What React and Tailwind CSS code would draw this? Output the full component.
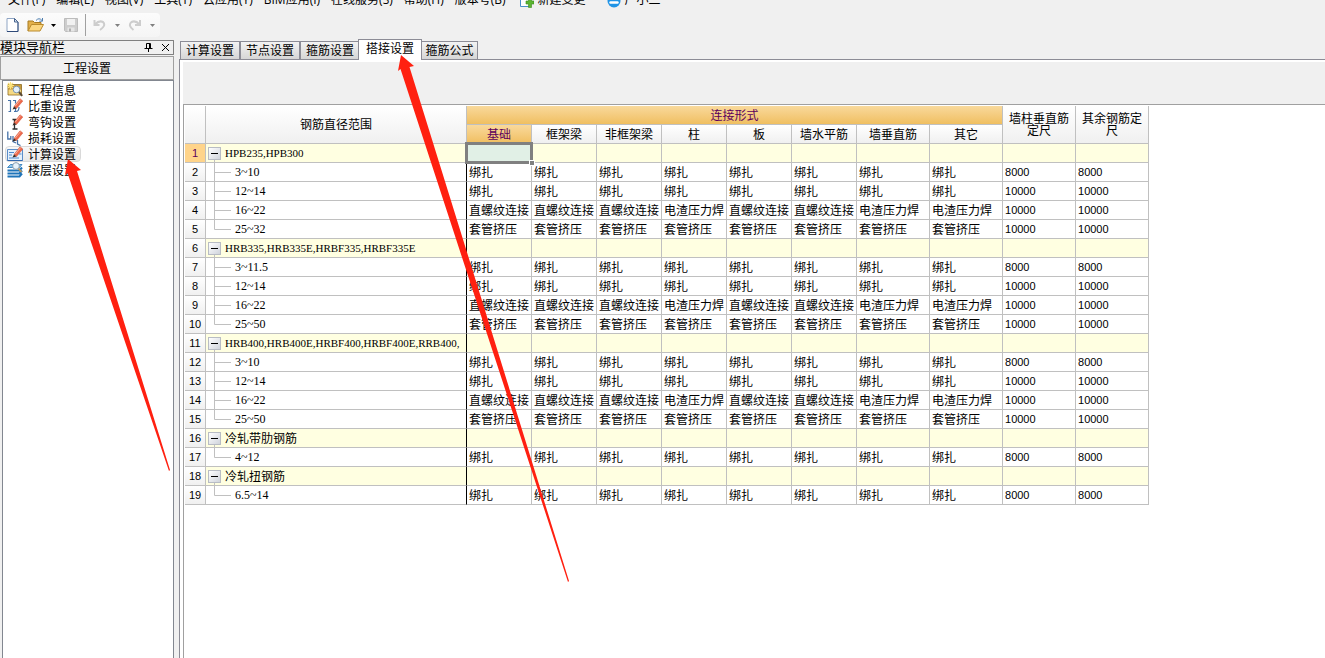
import React from "react";

const menus = ["文件(F)", "编辑(E)", "视图(V)", "工具(T)", "云应用(Y)", "BIM应用(I)", "在线服务(S)", "帮助(H)", "版本号(B)"];
const tabs = ["计算设置", "节点设置", "箍筋设置", "搭接设置", "箍筋公式"];
const columns = ["基础", "框架梁", "非框架梁", "柱", "板", "墙水平筋", "墙垂直筋", "其它"];

const B = "绑扎";
const Z = "直螺纹连接";
const D = "电渣压力焊";
const T = "套管挤压";
const tie = [B, B, B, B, B, B, B, B];
const thread = [Z, Z, Z, D, Z, Z, D, D];
const sleeve = [T, T, T, T, T, T, T, T];

const rows = [
  { group: "HPB235,HPB300" },
  { name: "3~10", cells: tie, len: "8000" },
  { name: "12~14", cells: tie, len: "10000" },
  { name: "16~22", cells: thread, len: "10000" },
  { name: "25~32", cells: sleeve, len: "10000", last: true },
  { group: "HRB335,HRB335E,HRBF335,HRBF335E" },
  { name: "3~11.5", cells: tie, len: "8000" },
  { name: "12~14", cells: tie, len: "10000" },
  { name: "16~22", cells: thread, len: "10000" },
  { name: "25~50", cells: sleeve, len: "10000", last: true },
  { group: "HRB400,HRB400E,HRBF400,HRBF400E,RRB400," },
  { name: "3~10", cells: tie, len: "8000" },
  { name: "12~14", cells: tie, len: "10000" },
  { name: "16~22", cells: thread, len: "10000" },
  { name: "25~50", cells: sleeve, len: "10000", last: true },
  { group: "冷轧带肋钢筋" },
  { name: "4~12", cells: tie, len: "8000", last: true },
  { group: "冷轧扭钢筋" },
  { name: "6.5~14", cells: tie, len: "8000", last: true },
];

function Pencil() {
  return (
    <g>
      <path d="M7 8.500 L13 0.800 L15.800 3 L9.500 10.500 Z" fill="#ee6a4c" stroke="#cf4a30" strokeWidth="0.5" />
      <path d="M8.300 8 L13.600 1.600" stroke="#f9b09c" strokeWidth="1" />
      <path d="M7 8.500 L5.500 11.500 L9.500 10.500 Z" fill="#3a2a22" />
    </g>
  );
}

const navIcons = {
  info: (
    <g>
      <path d="M1 2.500 h13.500 v10.500 h-13.500 z" fill="#c79a3c" stroke="#8a6a22" strokeWidth="0.8" />
      <path d="M1.500 7.500 h12.500 v5 h-12.500 z" fill="#f5d985" />
      <path d="M3.500 0 v7 M0 3.500 h7 M1 1 l5 5 M6 1 l-5 5" stroke="#fbe27a" strokeWidth="1.200" />
      <circle cx="9.500" cy="7.500" r="3.300" fill="#e4f1fb" stroke="#7f96ac" strokeWidth="1" />
      <path d="M12 10 l3.200 3.800" stroke="#5a4a36" strokeWidth="2" />
    </g>
  ),
  weight: (
    <g>
      <path d="M1 2.500 h2.500 v11 h-2 M6 2.500 h2.500 v3 M7 13.500 h1.500 v-4 M12 9 q0 4.500 -3 4.500" fill="none" stroke="#4672a8" strokeWidth="1.200" />
      <Pencil />
    </g>
  ),
  hook: (
    <g>
      <path d="M5.500 5.500 h4 M7.500 5.500 v9 M5.500 15 h5" fill="none" stroke="#2f2f2f" strokeWidth="1.300" />
      <Pencil />
    </g>
  ),
  loss: (
    <g>
      <path d="M0.800 1.500 v7.500 h3 v-3 M6 6 v5.500 l3 1.500 M10.500 10 v4 l3 1.500" fill="none" stroke="#4672a8" strokeWidth="1.300" />
      <Pencil />
    </g>
  ),
  calc: (
    <g>
      <path d="M0.500 3.500 h15 v11 h-15 z" fill="#e4f0fb" stroke="#5b8dc9" strokeWidth="1" />
      <path d="M0.500 14.500 h15" stroke="#2f68b0" strokeWidth="1" />
      <path d="M2 6.500 h5 M2 9 h3 M2 12 h10 M12 8 h2.500" stroke="#4f8ad0" strokeWidth="1.200" />
      <Pencil />
    </g>
  ),
  floor: (
    <g>
      <path d="M0.500 5.500 l3 -3 h11.500 l-2.500 3 z" fill="#8cc6ee" stroke="#2474b5" strokeWidth="0.8" />
      <path d="M0.500 8.500 h12 l2.500 -3 M0.500 11.500 h12 l2.500 -3 M0.500 14.500 h12 l2.500 -3" fill="none" stroke="#1e74ba" strokeWidth="2" />
      <circle cx="9" cy="4" r="3.400" fill="#e6f2fa" stroke="#8b9fb0" strokeWidth="1" />
      <path d="M11.500 6.500 l3 3.500" stroke="#c09a5c" strokeWidth="1.800" />
    </g>
  ),
};

const nav = [
  ["工程信息", "info"],
  ["比重设置", "weight"],
  ["弯钩设置", "hook"],
  ["损耗设置", "loss"],
  ["计算设置", "calc"],
  ["楼层设置", "floor"],
];

function MenuBar() {
  return (
    <nav className="flex h-3 items-end gap-px overflow-hidden pl-[3px] font-['Open_Sans','Noto_Sans_CJK_SC',sans-serif]" aria-label="菜单">
      {menus.map((m) => (
        <button key={m} type="button" className="shrink-0 px-[5px] pb-1 text-xs leading-4 whitespace-nowrap">
          {m}
        </button>
      ))}
      <button type="button" className="ml-2 flex shrink-0 items-end gap-1 pb-1 text-xs leading-4 whitespace-nowrap">
        <svg width="14" height="14" viewBox="0 0 14 14" aria-hidden="true">
          <path d="M0.500 0 v12.500 h10 V0" fill="#fff" stroke="#4a90c8" />
          <path d="M8.500 4 h3 v3 h2.500 v3 h-2.500 v3.500 h-3 v-3.500 h-2.500 v-3 h2.500 z" fill="#5cb531" stroke="#3a8a1c" strokeWidth="0.600" />
        </svg>
        新建变更
      </button>
      <button type="button" className="ml-5 flex shrink-0 items-end gap-1 pb-1 text-xs leading-4 whitespace-nowrap">
        <svg width="14" height="14" viewBox="0 0 14 14" aria-hidden="true">
          <circle cx="7" cy="7" r="6.500" fill="#2094e6" />
          <path d="M3.500 8.500 h7" fill="none" stroke="#fff" strokeWidth="2.400" strokeLinecap="round" />
        </svg>
        广小二
      </button>
    </nav>
  );
}

function Caret({ className }) {
  return (
    <svg width="5" height="3" viewBox="0 0 5 3" className={className} aria-hidden="true">
      <path d="M0 0 h5 l-2.500 3 z" fill="currentColor" />
    </svg>
  );
}

function ToolBar() {
  return (
    <div className="flex h-6 w-40 items-center rounded-sm bg-gradient-to-b from-[#fcfcfc] to-[#f5f5f5] pl-1.5" role="toolbar">
      <button type="button" aria-label="新建" className="mr-2">
        <svg width="13" height="16" viewBox="0 0 13 16">
          <path d="M1 1.500 h7.500 l3.500 3.500 v9.500 h-11 z" fill="#fff" stroke="#8fa5c4" />
          <path d="M12 5 v9.500 h-11" fill="none" stroke="#2f4a78" />
          <path d="M8.500 1.500 v3.500 h3.500 z" fill="#dbe6f3" stroke="#47648e" />
        </svg>
      </button>
      <button type="button" aria-label="打开" className="flex items-center gap-1.5">
        <svg width="18" height="16" viewBox="0 0 18 16">
          <path d="M1 14 V4 h5 l1.500 1.500 h6.500 v3" fill="#e3b04a" stroke="#a67a22" />
          <path d="M1 14 l3.500 -6.500 h12 l-3.500 6.500 z" fill="#fbd680" stroke="#b98a2c" />
          <path d="M9 3.500 q3 -3.500 6 0 M15.500 1 v3.200 h-3.200" fill="none" stroke="#4f7fb0" />
        </svg>
        <Caret className="text-black" />
      </button>
      <button type="button" aria-label="保存" className="ml-2">
        <svg width="14" height="14" viewBox="0 0 14 14">
          <path d="M0.500 0.500 h13 v13 h-12 l-1 -1 z" fill="#cdcdcd" stroke="#bcbcbc" />
          <path d="M3 1 h8 v6 h-8 z" fill="#f1f1f1" />
          <path d="M3.500 9.500 h7 v4 h-7 z" fill="#e6e6e6" />
          <path d="M5 10.500 h2 v3 h-2 z" fill="#b0b0b0" />
        </svg>
      </button>
      <span className="mx-[7px] h-[22px] w-px bg-[#a0a0a0]" />
      <button type="button" aria-label="撤销" className="flex items-center gap-2 text-[#808080]">
        <svg width="14" height="12" viewBox="0 0 14 12">
          <path d="M1.500 1 v5 h5 M2 5.500 q4 -4.500 8 -2.500 q3.500 3.500 -3 8" fill="none" stroke="#cdcdcd" strokeWidth="2" />
        </svg>
        <Caret />
      </button>
      <button type="button" aria-label="重做" className="ml-2 flex items-center gap-2 text-[#808080]">
        <svg width="14" height="12" viewBox="0 0 14 12">
          <path d="M12 1 v5 h-5 M11.500 5.500 q-4 -4.500 -8 -2.500 q-4 3.500 2 8" fill="none" stroke="#cdcdcd" strokeWidth="2" />
        </svg>
        <Caret />
      </button>
    </div>
  );
}

function SideBar() {
  return (
    <aside className="flex w-[174px] shrink-0 flex-col pt-px">
      <header className="flex h-[15px] items-center rounded-[1px] border border-l-0 border-[#808080] pr-[3px]">
        <h2 className="flex-1 text-[13px] leading-3">模块导航栏</h2>
        <button type="button" aria-label="固定" className="mr-2">
          <svg width="9" height="9" viewBox="0 0 9 9">
            <path d="M2.500 5 V0.500 h4 V5 M5.500 0.500 V5 M0.500 5.500 h8 M4.500 6 V9" fill="none" stroke="#000" />
          </svg>
        </button>
        <button type="button" aria-label="关闭">
          <svg width="9" height="9" viewBox="0 0 9 9">
            <path d="M1 1 L8 8 M8 1 L1 8" stroke="#000" />
          </svg>
        </button>
      </header>
      <button type="button" className="mt-px flex h-6 items-center justify-center border border-[#a0a0a0] pt-0.5 text-xs">
        工程设置
      </button>
      <ul className="ml-0.5 flex-1 border border-b-0 border-[#828790] bg-white pt-px pl-0.5">
        {nav.map(([label, icon]) => (
          <li key={label} className="flex h-4">
            <button
              type="button"
              className={
                label === "计算设置"
                  ? "flex h-4 items-center gap-[5px] rounded-sm border border-[#d9d9d9] bg-gradient-to-b from-[#f8f8f8] to-[#e8e8e8] px-px pr-1 text-xs leading-3"
                  : "flex h-4 items-center gap-[5px] border border-transparent px-px pr-1 text-xs leading-3"
              }
            >
              <svg width="16" height="16" viewBox="0 0 16 16" aria-hidden="true">
                {navIcons[icon]}
              </svg>
              <span className="pt-0.5">{label}</span>
            </button>
          </li>
        ))}
      </ul>
    </aside>
  );
}

function TabStrip() {
  return (
    <div role="tablist" className="flex h-[21px] items-end border-b border-[#8c8c96] pl-px">
      {tabs.map((t) => (
        <button
          key={t}
          type="button"
          role="tab"
          aria-selected={t === "搭接设置"}
          className={
            t === "搭接设置"
              ? "relative z-10 -mb-px -ml-0.5 h-[21px] w-16 border border-b-0 border-[#8c8c96] bg-white pb-0.5 text-center text-xs leading-4"
              : "h-[18px] w-[60px] border border-b-0 border-[#8c8c96] bg-gradient-to-b from-[#f3f3f3] to-[#d6d6d6] pt-px text-center text-xs leading-4 whitespace-nowrap last:-ml-px last:w-[57px]"
          }
        >
          {t}
        </button>
      ))}
    </div>
  );
}

function Branch({ last }) {
  return (
    <svg width="25" height="18" viewBox="0 0 25 18" className="block shrink-0 overflow-visible" aria-hidden="true">
      <path d={last ? "M8.500 -3 V9.500 H25" : "M8.500 -3 V18 M8.500 9.500 H25"} fill="none" stroke="#c0c0c0" />
    </svg>
  );
}

const head = "border-r border-b border-[#c0c0c0] bg-gradient-to-b from-white to-[#f0f0f0] p-0 font-normal";
const hot = "border-r border-b border-[#c0c0c0] bg-gradient-to-b from-[#f9d99b] to-[#f0bf60] p-0 pt-0.5 font-normal text-[#5c005c]";

function Grid() {
  return (
    <table className="w-[964px] table-fixed border-separate border-spacing-0 text-xs leading-3">
      <colgroup>
        <col className="w-[21px]" />
        <col className="w-[261px]" />
        {columns.map((c, i) => (
          <col key={c} className={i < 6 ? "w-[65px]" : "w-[73px]"} />
        ))}
        <col className="w-[73px]" />
        <col className="w-[73px]" />
      </colgroup>
      <thead>
        <tr className="h-[19px]">
          <th rowSpan={2} className={head} aria-label="序号" />
          <th rowSpan={2} className={head}>钢筋直径范围</th>
          <th colSpan={8} className={hot}>连接形式</th>
          <th rowSpan={2} className={head + " px-1"}>墙柱垂直筋定尺</th>
          <th rowSpan={2} className={head + " px-1"}>其余钢筋定尺</th>
        </tr>
        <tr className="h-[19px]">
          {columns.map((c, i) => (
            <th key={c} className={i === 0 ? hot : head + " pt-0.5"}>{c}</th>
          ))}
        </tr>
      </thead>
      <tbody>
        {rows.map((r, n) => (
          <tr key={n} className={r.group ? "h-[19px] bg-[#ffffe1]" : "h-[19px] bg-white"}>
            <th
              scope="row"
              className={
                (n === 0 ? "bg-[#ffd48a] text-[#5c005c]" : "bg-gradient-to-b from-white to-[#f0f0f0]") +
                " border-r border-b border-[#c0c0c0] p-0 font-['Liberation_Sans',sans-serif] text-[11px] font-normal"
              }
            >
              {n + 1}
            </th>
            <td className="border-r border-b border-r-black border-b-[#c0c0c0] p-0">
              {r.group ? (
                <div className="flex h-[18px] items-center gap-1 pl-0.5">
                  <button
                    type="button"
                    aria-label="折叠"
                    className="relative z-10 flex size-[13px] shrink-0 items-center justify-center border border-[#b8bcc4] bg-gradient-to-br from-white to-[#d0d4dc]"
                  >
                    <span className="h-px w-[7px] bg-black" />
                  </button>
                  <span
                    className={
                      n > 14
                        ? "pt-0.5 text-xs leading-3 whitespace-nowrap"
                        : "font-['Liberation_Serif',serif] text-[11px] leading-3 whitespace-nowrap"
                    }
                  >
                    {r.group}
                  </span>
                </div>
              ) : (
                <div className="flex h-[18px] items-center gap-1">
                  <Branch last={r.last} />
                  <span className="font-['Liberation_Serif',serif]">{r.name}</span>
                </div>
              )}
            </td>
            {columns.map((c, i) => (
              <td key={c} className="relative border-r border-b border-[#c0c0c0] p-0 pt-0.5 pl-0.5 whitespace-nowrap">
                {r.cells ? r.cells[i] : null}
                {n === 0 && i === 0 ? (
                  <span className="absolute -inset-x-0.5 -inset-y-0.5 z-10 border-3 border-[#808080] bg-[#e1f0e6]">
                    <span className="absolute -right-1 -bottom-1 size-1 bg-[#808080] outline outline-white" />
                  </span>
                ) : null}
              </td>
            ))}
            {[0, 1].map((k) => (
              <td key={k} className="border-r border-b border-[#c0c0c0] p-0 pl-0.5 font-['Liberation_Sans',sans-serif] text-[11px]">
                {r.len}
              </td>
            ))}
          </tr>
        ))}
      </tbody>
    </table>
  );
}

export default function App() {
  return (
    <div className="relative flex h-screen flex-col overflow-hidden bg-[#f0f0f0] font-['Liberation_Sans','Noto_Sans_CJK_SC',sans-serif] text-xs text-black">
      <MenuBar />
      <div className="pt-px pb-0.5">
        <ToolBar />
      </div>
      <div className="flex min-h-0 flex-1">
        <SideBar />
        <main className="ml-[5px] flex min-w-0 flex-1 flex-col">
          <TabStrip />
          <div className="flex min-h-0 flex-1 flex-col border-l border-[#8c8c96] bg-white pt-0.5 pl-[3px]">
            <div className="h-[42px] shrink-0 bg-[#f0f0f0]" />
            <div className="min-h-0 flex-1 overflow-hidden border-t border-l border-[#a0a0a0] pt-px pl-px">
              <Grid />
            </div>
          </div>
        </main>
      </div>
      <svg width="1325" height="658" viewBox="0 0 1325 658" className="pointer-events-none absolute top-0 left-0 z-20" aria-hidden="true">
        <path d="M401 55 L414 66 L409.500 67 L569 581 L568 582 L400.500 69 L398 71 Z" fill="#ff2010" />
        <path d="M68 159 L81 170 L77 171 L170 470 L169 471 L67.500 173 L65 175 Z" fill="#ff2010" />
      </svg>
    </div>
  );
}
